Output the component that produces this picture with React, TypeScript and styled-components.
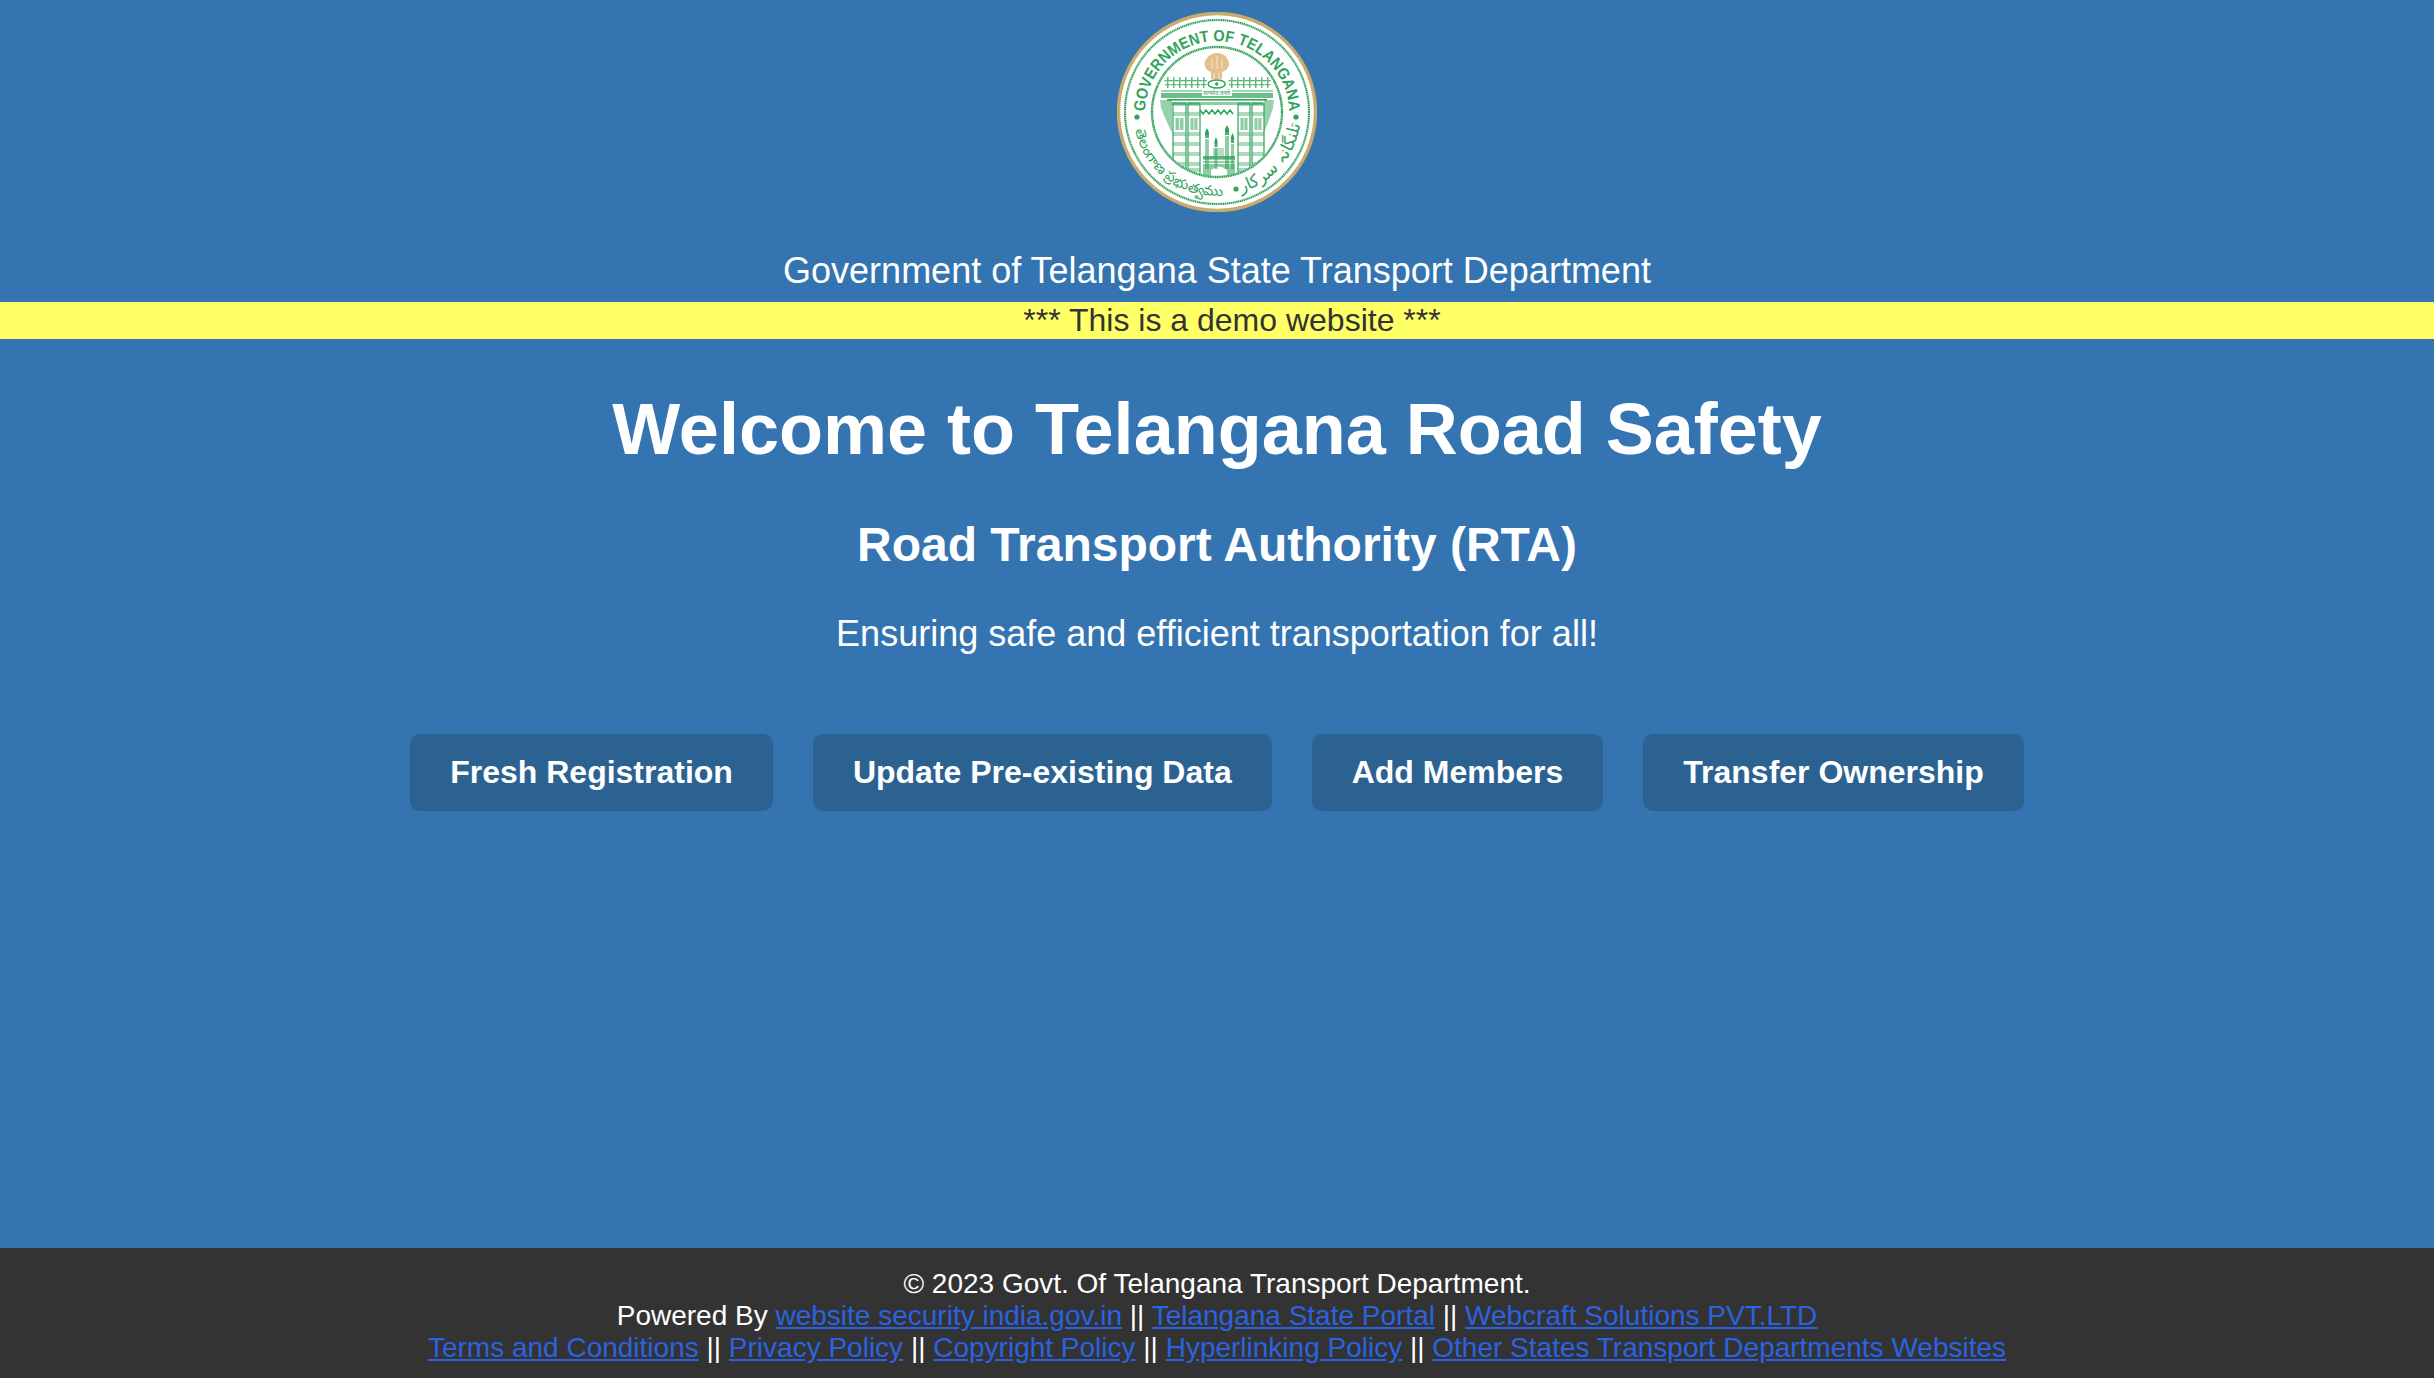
import React from "react";
import styled, { createGlobalStyle } from "styled-components";

const GlobalStyle = createGlobalStyle`
  * {
    box-sizing: border-box;
  }

  body {
    margin: 0;
    background: #3374b1;
    font-family: "Liberation Sans", Arial, sans-serif;
    color: #fff;
  }
`;

const Page = styled.div`
  display: flex;
  flex-direction: column;
  min-height: 100vh;
`;

const Header = styled.header`
  display: flex;
  flex-direction: column;
  align-items: center;
  padding-top: 12px;
`;

const Seal = styled.svg`
  display: block;
  width: 200px;
  height: 200px;
`;

const HeaderTitle = styled.div`
  margin-top: 39px;
  height: 51px;
  font-size: 36px;
  line-height: 40px;
`;

const DemoBar = styled.div`
  height: 37px;
  padding-left: 30px;
  background: #ffff66;
  color: #333;
  font-size: 32px;
  line-height: 37px;
  text-align: center;
`;

const Main = styled.main`
  display: flex;
  flex-direction: column;
  align-items: center;
  text-align: center;
`;

const Heading = styled.h1`
  margin: 49px 0 0;
  font-size: 72px;
  line-height: 83px;
  font-weight: 700;
`;

const SubHeading = styled.h2`
  margin: 46px 0 0;
  font-size: 48px;
  line-height: 55px;
  font-weight: 700;
`;

const Tagline = styled.p`
  margin: 41px 0 0;
  font-size: 36px;
  line-height: 41px;
`;

const ButtonRow = styled.div`
  display: flex;
  justify-content: center;
  gap: 40px;
  margin-top: 80px;
`;

const ActionButton = styled.a`
  display: block;
  height: 77px;
  padding: 0 40px;
  border-radius: 10px;
  background: #2c6292;
  color: #fff;
  font-size: 32px;
  font-weight: 700;
  line-height: 77px;
`;

const Footer = styled.footer`
  margin-top: auto;
  height: 130px;
  padding-top: 20px;
  background: #333;
  font-size: 28px;
  line-height: 32px;
  text-align: center;

  a {
    color: #2a63e0;
    text-decoration: underline;
  }
`;

const GREEN = "#2fa35a";
const TAN = "#e3c08c";

const pillars = [
	{ x: 56, w: 13 },
	{ x: 71, w: 12 },
	{ x: 121, w: 12 },
	{ x: 135, w: 12 },
];
const pillarBands = [90, 100, 120, 130, 140, 150, 156];
const crenels = [50, 56, 62, 68, 74, 80, 86, 114, 120, 126, 132, 138, 144, 150];
const minarets = [
	{ x: 90, top: 116, w: 3.8 },
	{ x: 99, top: 125, w: 3 },
	{ x: 110, top: 113, w: 4 },
	{ x: 115.5, top: 121, w: 3.2 },
];

function TelanganaSeal() {
	return (
		<Seal viewBox="0 0 200 200">
			<defs>
				<path id="seal-top" d="M 30 118 A 72 72 0 1 1 170 118" />
				<path id="seal-left" d="M 18 118 A 84 84 0 0 0 110 183.5" />
				<path id="seal-right" d="M 124 180.5 A 84 84 0 0 0 183.5 110" />
				<clipPath id="seal-inner">
					<circle cx="100" cy="100" r="64" />
				</clipPath>
			</defs>
			<circle cx="100" cy="100" r="98.5" fill="#fff" stroke="#c9ab6c" strokeWidth="3.4" />
			<circle cx="100" cy="100" r="92" fill="none" stroke={GREEN} strokeWidth="2.2" strokeDasharray="1.4 0.5" />
			<text fontFamily="Liberation Sans, sans-serif" fontWeight="700" fontSize="16" fill={GREEN}>
				<textPath href="#seal-top" startOffset="50%" textAnchor="middle" textLength="222" lengthAdjust="spacingAndGlyphs">GOVERNMENT OF TELANGANA</textPath>
			</text>
			<circle cx="20" cy="105" r="2.6" fill={GREEN} />
			<circle cx="179" cy="105" r="2.6" fill={GREEN} />
			<circle cx="119" cy="177" r="2.6" fill={GREEN} />
			<text fontFamily="Noto Sans, DejaVu Sans, sans-serif" fontSize="14" fill={GREEN}>
				<textPath href="#seal-left">తెలంగాణ ప్రభుత్వము</textPath>
			</text>
			<text fontFamily="DejaVu Sans, sans-serif" fontSize="17" fill={GREEN}>
				<textPath href="#seal-right">تلنگانہ سرکار</textPath>
			</text>

			<g clipPath="url(#seal-inner)">
				{/* arch */}
				{crenels.map((x) => (
					<g key={x} fill={GREEN} opacity="0.75">
						<rect x={x} y="65" width="1.5" height="11" />
						<rect x={x - 2.5} y="68" width="6.5" height="1.3" />
						<rect x={x - 2} y="72" width="5.5" height="1.3" />
					</g>
				))}
				<rect x="44" y="78" width="112" height="2" fill={GREEN} opacity="0.45" />
				<rect x="44" y="81" width="112" height="5" fill={GREEN} opacity="0.7" />
				<rect x="50" y="87" width="100" height="1.6" fill={GREEN} />
				<rect x="54" y="90" width="92" height="3" fill={GREEN} opacity="0.55" />
				{/* side brackets */}
				<path d="M43 88 H55 V121 L49 108 L44 96 Z" fill={GREEN} opacity="0.5" />
				<path d="M157 88 H147 V121 L152 108 L156 96 Z" fill={GREEN} opacity="0.5" />
				{/* pillars */}
				{pillars.map(({ x, w }) => (
					<g key={x}>
						<rect x={x} y="92" width={w} height="75" fill="#fff" stroke={GREEN} strokeWidth="1.2" />
						<rect x={x + 2.5} y="106" width={w - 5} height="12" fill={GREEN} opacity="0.55" />
						<rect x={x + w / 2 - 0.4} y="106" width="0.8" height="12" fill="#fff" />
						{pillarBands.map((y) => (
							<rect key={y} x={x} y={y} width={w} height="4" fill={GREEN} opacity="0.4" />
						))}
					</g>
				))}
				<path d="M83 98 l3 4 3-4 3 4 3-4 3 4 3-4 3 4 3-4 3 4 3-4 3 4" fill="none" stroke={GREEN} strokeWidth="1.6" />
				{/* charminar */}
				<g fill={GREEN}>
					{minarets.map(({ x, top, w }) => (
						<g key={x}>
							<path d={`M${x} ${top} l${w / 2} 4 v3 h${-w} v-3 z`} />
							<rect x={x - w / 2} y={top + 7} width={w} height={3} opacity="0.85" />
							<rect x={x - w / 2} y={top + 11} width={w} height={146 - top} opacity="0.55" />
						</g>
					))}
					<rect x="96" y="136" width="11" height="8" opacity="0.35" />
					<rect x="86" y="144" width="32" height="3.6" opacity="0.8" />
					<rect x="86" y="149" width="32" height="2" opacity="0.5" />
					<path d="M86 152 H118 V166 H110 V158 Q102 151 94 158 V166 H86 Z" opacity="0.55" />
				</g>
			</g>
			<circle cx="100" cy="100" r="65" fill="none" stroke={GREEN} strokeWidth="2.4" strokeDasharray="1.4 0.4" />
			{/* national emblem */}
			<path d="M87.5 52 C88 46 94 40.5 100 41 C106 40.5 112 46 112 52 C112 56 108 59 105 60 L105 67 H94 V60 C91 59 87.5 56 87.5 52 Z" fill={TAN} />
			<path d="M95 47 V57 M100 44 V57 M105 47 V57 M97 61 V67 M102 61 V67" stroke="#fff" strokeWidth="0.6" />
			<ellipse cx="99.7" cy="72" rx="8.6" ry="4" fill="#fff" stroke={GREEN} strokeWidth="1.5" />
			<circle cx="99.7" cy="72" r="1.7" fill={GREEN} />
			<rect x="85" y="77" width="30" height="7" fill="#fff" />
			<text x="99.7" y="83" fontFamily="Noto Sans, DejaVu Sans, sans-serif" fontSize="5.5" fill={GREEN} textAnchor="middle">सत्यमेव जयते</text>
		</Seal>
	);
}

function App() {
	return (
		<Page>
			<GlobalStyle />
			<Header>
				<TelanganaSeal />
				<HeaderTitle>Government of Telangana State Transport Department</HeaderTitle>
			</Header>
			<DemoBar>*** This is a demo website ***</DemoBar>
			<Main>
				<Heading>Welcome to Telangana Road Safety</Heading>
				<SubHeading>Road Transport Authority (RTA)</SubHeading>
				<Tagline>Ensuring safe and efficient transportation for all!</Tagline>
				<ButtonRow>
					<ActionButton>Fresh Registration</ActionButton>
					<ActionButton>Update Pre-existing Data</ActionButton>
					<ActionButton>Add Members</ActionButton>
					<ActionButton>Transfer Ownership</ActionButton>
				</ButtonRow>
			</Main>
			<Footer>
				<div>© 2023 Govt. Of Telangana Transport Department.</div>
				<div>
					Powered By <a href="#">website security india.gov.in</a> || <a href="#">Telangana State Portal</a> || <a href="#">Webcraft Solutions PVT.LTD</a>
				</div>
				<div>
					<a href="#">Terms and Conditions</a> || <a href="#">Privacy Policy</a> || <a href="#">Copyright Policy</a> || <a href="#">Hyperlinking Policy</a> || <a href="#">Other States Transport Departments Websites</a>
				</div>
			</Footer>
		</Page>
	);
}

export default App;
